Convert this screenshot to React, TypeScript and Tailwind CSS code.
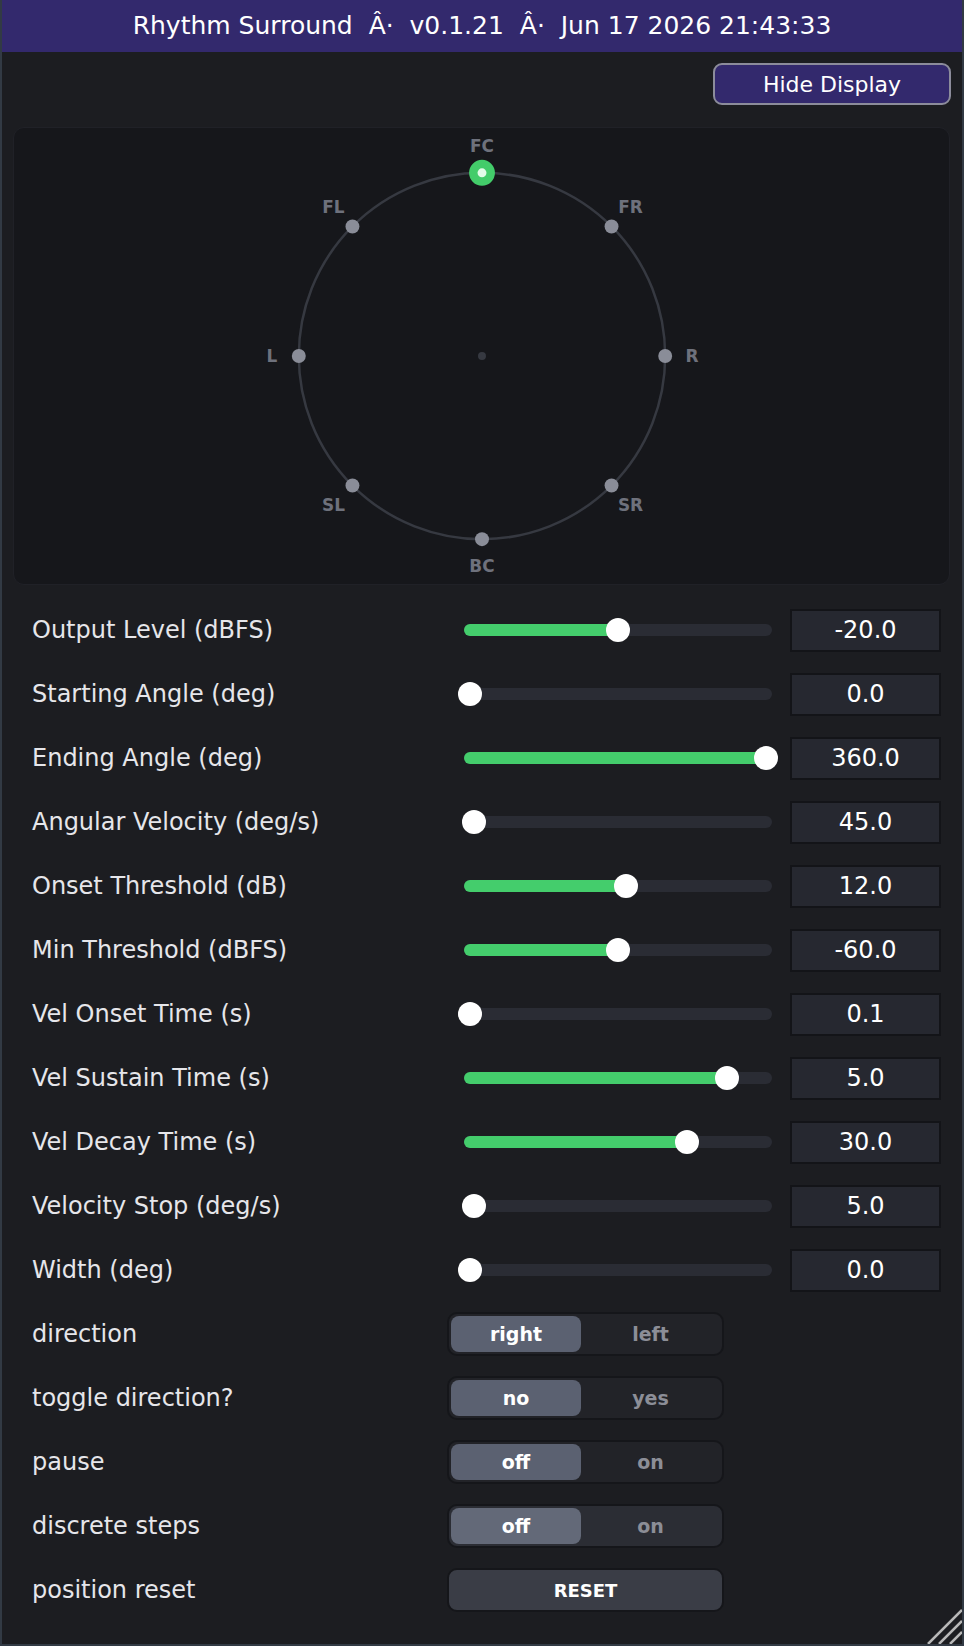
import React from 'react';

type SliderRow = { label: string; value: string; frac: number };

const sliders: SliderRow[] = [
  { label: 'Output Level (dBFS)', value: '-20.0', frac: 0.5 },
  { label: 'Starting Angle (deg)', value: '0.0', frac: 0 },
  { label: 'Ending Angle (deg)', value: '360.0', frac: 1 },
  { label: 'Angular Velocity (deg/s)', value: '45.0', frac: 0.012 },
  { label: 'Onset Threshold (dB)', value: '12.0', frac: 0.527 },
  { label: 'Min Threshold (dBFS)', value: '-60.0', frac: 0.5 },
  { label: 'Vel Onset Time (s)', value: '0.1', frac: 0 },
  { label: 'Vel Sustain Time (s)', value: '5.0', frac: 0.868 },
  { label: 'Vel Decay Time (s)', value: '30.0', frac: 0.734 },
  { label: 'Velocity Stop (deg/s)', value: '5.0', frac: 0.012 },
  { label: 'Width (deg)', value: '0.0', frac: 0 },
];

const toggles = [
  { label: 'direction', options: ['right', 'left'], hover: false },
  { label: 'toggle direction?', options: ['no', 'yes'], hover: false },
  { label: 'pause', options: ['off', 'on'], hover: false },
  { label: 'discrete steps', options: ['off', 'on'], hover: true },
];

const speakers = [
  { label: 'FC', deg: 0 },
  { label: 'FR', deg: 45 },
  { label: 'R', deg: 90 },
  { label: 'SR', deg: 135 },
  { label: 'BC', deg: 180 },
  { label: 'SL', deg: 225 },
  { label: 'L', deg: 270 },
  { label: 'FL', deg: 315 },
];

function SpeakerDisplay() {
  const cx = 469;
  const cy = 229;
  const r = 184;
  const lr = 211;

  return (
    <svg viewBox="0 0 937 458" className="w-full h-full">
      <circle cx={cx} cy={cy} r={r} fill="none" stroke="#363941" strokeWidth={2.5} />
      <circle cx={cx} cy={cy} r={4} fill="#363941" />
      {speakers.map((s) => {
        const a = (s.deg * Math.PI) / 180;
        const x = cx + r * Math.sin(a);
        const y = cy - r * Math.cos(a);
        const lx = cx + lr * Math.sin(a);
        const ly = cy - lr * Math.cos(a);
        return (
          <g key={s.label}>
            {s.deg === 0 ? (
              <>
                <circle cx={x} cy={y} r={13} fill="#43cc6a" />
                <circle cx={x} cy={y} r={4.5} fill="#e3fbe8" />
              </>
            ) : (
              <circle cx={x} cy={y} r={7} fill="#8a8d98" />
            )}
            <text
              x={lx}
              y={ly}
              textAnchor="middle"
              dominantBaseline="central"
              fill="#6e717c"
              fontSize={17}
              fontWeight={700}
              fontFamily="'DejaVu Sans', sans-serif"
            >
              {s.label}
            </text>
          </g>
        );
      })}
    </svg>
  );
}

function Slider({ frac }: { frac: number }) {
  const center = 6 + frac * 296;
  return (
    <div className="relative w-[308px] h-6 flex items-center">
      <div className="w-full h-3 rounded-full bg-[#2a2c34]" />
      {frac > 0 && (
        <div className="absolute left-0 h-3 rounded-full bg-[#44cd6c]" style={{ width: center }} />
      )}
      <div className="absolute w-6 h-6 rounded-full bg-white" style={{ left: center - 12 }} />
    </div>
  );
}

export default function App() {
  return (
    <div className="w-[964px] h-[1646px] flex flex-col bg-[#1c1d21] border-x-2 border-b-2 border-[#323a44] font-['DejaVu_Sans',sans-serif] relative overflow-hidden">
      <div className="h-[52px] shrink-0 bg-[#33296d] flex items-center justify-center text-white text-[25px] whitespace-pre">
        Rhythm Surround  Â·  v0.1.21  Â·  Jun 17 2026 21:43:33
      </div>

      <div className="flex justify-end pt-[11px] pr-[11px]">
        <button className="w-[238px] h-[42px] rounded-[9px] border-2 border-[#8c8c9b] bg-[#33296d] text-white text-[22px]">
          Hide Display
        </button>
      </div>

      <div className="mt-[22px] ml-[11px] w-[937px] h-[458px] rounded-[11px] bg-[#16171b] border border-[#202127]">
        <SpeakerDisplay />
      </div>

      <div className="mt-[13px] flex flex-col pl-[30px]">
        {sliders.map((s) => (
          <div key={s.label} className="h-16 flex items-center">
            <div className="w-[432px] text-[24px] text-[#e6e6ea]">{s.label}</div>
            <Slider frac={s.frac} />
            <div className="ml-[18px] w-[151px] h-[43px] flex items-center justify-center bg-[#262830] border-2 border-[#131418] text-white text-[24px]">
              {s.value}
            </div>
          </div>
        ))}

        {toggles.map((t) => (
          <div key={t.label} className="h-16 flex items-center">
            <div className="w-[415px] text-[24px] text-[#e6e6ea]">{t.label}</div>
            <div
              className={
                t.hover
                  ? 'w-[277px] h-[44px] rounded-[10px] border-2 border-[#15161a] bg-[#2b2d34] flex items-center p-[2px]'
                  : 'w-[277px] h-[44px] rounded-[10px] border-2 border-[#15161a] bg-[#222328] flex items-center p-[2px]'
              }
            >
              <div
                className={
                  t.hover
                    ? 'w-[130px] h-9 rounded-[8px] bg-[#636978] flex items-center justify-center text-white text-[19px] font-bold'
                    : 'w-[130px] h-9 rounded-[8px] bg-[#5b6171] flex items-center justify-center text-white text-[19px] font-bold'
                }
              >
                {t.options[0]}
              </div>
              <div className="flex-1 h-9 flex items-center justify-center text-[#8c8e97] text-[19px] font-bold">
                {t.options[1]}
              </div>
            </div>
          </div>
        ))}

        <div className="h-16 flex items-center">
          <div className="w-[415px] text-[24px] text-[#e6e6ea]">position reset</div>
          <button className="w-[277px] h-[44px] rounded-[10px] border-2 border-[#15161a] bg-[#3a3d46] text-white text-[18px] font-bold">
            RESET
          </button>
        </div>
      </div>

      <svg className="absolute right-0 bottom-0 w-9 h-9" viewBox="0 0 36 36">
        <line x1="2" y1="36" x2="36" y2="2" stroke="#b9b9b9" strokeWidth="2.5" />
        <line x1="13" y1="36" x2="36" y2="13" stroke="#b9b9b9" strokeWidth="2.5" />
        <line x1="24" y1="36" x2="36" y2="24" stroke="#b9b9b9" strokeWidth="2.5" />
      </svg>
    </div>
  );
}
